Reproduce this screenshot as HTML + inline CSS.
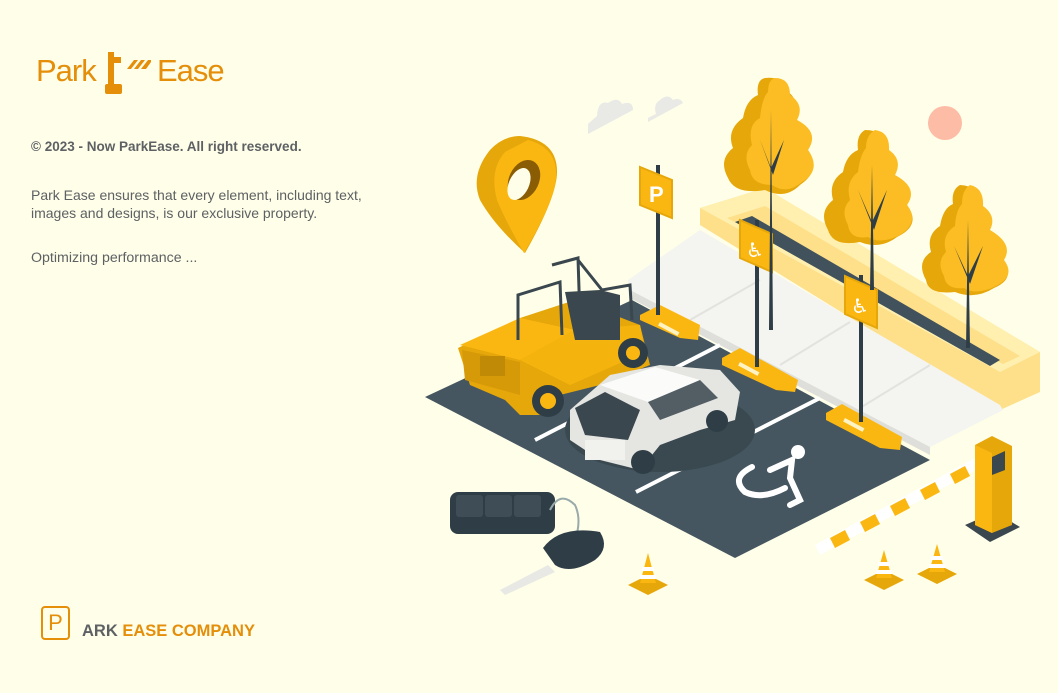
<!DOCTYPE html>
<html><head><meta charset="utf-8"><style>
html,body{margin:0;padding:0;width:1058px;height:693px;overflow:hidden;background:#fffee9;font-family:"Liberation Sans","DejaVu Sans",sans-serif}
.t{position:absolute;color:#5d6163}
</style></head><body>
<div style="position:absolute;left:36px;top:53px;font-size:31px;color:#e48e0a;letter-spacing:-1px">Park</div>
<div style="position:absolute;left:157px;top:53px;font-size:31px;color:#e48e0a;letter-spacing:-1px">Ease</div>
<svg style="position:absolute;left:0;top:0" width="1058" height="693">
<g fill="#e48e0a"><rect x="108" y="52" width="6" height="36"/><rect x="105" y="84" width="17" height="10" rx="2"/><rect x="108" y="57" width="13" height="6"/><polygon points="127,69 134,60 138,60 131,69"/><polygon points="134,69 141,60 145,60 138,69"/><polygon points="141,69 148,60 151,60 151,62 146,69"/></g>
</svg>
<div class="t" style="left:31px;top:139px;font-size:13.5px;font-weight:bold">© 2023 - Now ParkEase. All right reserved.</div>
<div class="t" style="left:31px;top:186px;font-size:14px;line-height:18px">Park Ease ensures that every element, including text,<br>images and designs, is our exclusive property.</div>
<div class="t" style="left:31px;top:250px;font-size:14.2px">Optimizing performance ...</div>
<div style="position:absolute;left:41px;top:606px;width:29px;height:34px;border:2.5px solid #e48e0a;border-radius:4px;box-sizing:border-box;color:#e48e0a;font-size:22px;text-align:center;line-height:29px">P</div>
<div style="position:absolute;left:82px;top:622px;font-size:16.5px;font-weight:bold;color:#5d6163">ARK <span style="color:#e48e0a">EASE COMPANY</span></div>

<svg style="position:absolute;left:0;top:0" width="1058" height="693">
<circle cx="945" cy="123" r="17" fill="#fdbca5"/>
<path d="M588,134 L633,110 Q633,100 622,104 Q618,96 608,103 Q598,100 597,116 L588,124 Z" fill="#e9e9e6"/>
<path d="M648,122 L683,103 Q680,97 673,100 Q668,93 660,100 Q653,104 656,114 L648,118 Z" fill="#e9e9e6"/>
<!-- pin -->
<path d="M520,136 Q556,140 557,170 Q558,195 525,253 Q494,225 480,200 Q470,175 490,150 Q503,136 520,136Z" fill="#e6a70a"/>
<path d="M528,140 Q558,148 556,178 Q555,200 524,253 Q505,220 497,200 Q489,170 505,152Z" fill="#fbb711"/>
<ellipse cx="524" cy="180" rx="15" ry="21" transform="rotate(25 524 180)" fill="#8a5d04"/>
<ellipse cx="519" cy="184" rx="10" ry="17" transform="rotate(25 519 184)" fill="#fffee9"/>
<!-- planter -->
<polygon points="700,208 765,188 1040,352 1040,392 1000,410 700,225" fill="#fedf8a"/>
<polygon points="700,208 765,188 1040,352 1000,372" fill="#fff0b0"/>
<polygon points="727,218 765,206 1020,356 1003,364" fill="#fedf8a"/>
<polygon points="735,222 752,216 1000,360 990,366" fill="#41525c"/>
<!-- sidewalk -->
<polygon points="628,280 700,230 1000,405 1003,410 930,447 630,290" fill="#f4f4f0"/>
<polygon points="630,290 930,447 930,455 630,298" fill="#dededa"/>
<g stroke="#e2e2de" stroke-width="2"><line x1="690" y1="320" x2="760" y2="280"/><line x1="780" y1="365" x2="850" y2="322"/><line x1="860" y1="408" x2="930" y2="365"/></g>
<!-- lot -->
<polygon points="425,397 632,300 930,460 735,558" fill="#455660"/>
<g stroke="#fff" stroke-width="4" fill="none"><line x1="535" y1="440" x2="720" y2="345"/><line x1="636" y1="492" x2="820" y2="398"/></g>
<g stroke="#fff" stroke-width="6" fill="none" stroke-linecap="round"><path d="M752,467 Q730,478 745,492 Q762,500 785,488"/><path d="M770,470 L792,460 L790,478 L800,500 L790,505"/></g>
<circle cx="798" cy="452" r="7" fill="#fff"/>
<!-- curbs -->
<g fill="#fbb711"><polygon points="640,315 660,305 700,325 698,340 680,338 640,320"/><polygon points="722,358 740,348 798,380 795,392 776,390 722,365"/><polygon points="826,413 842,404 902,437 900,450 880,448 826,420"/></g>
<g fill="#fff3c4"><rect x="660" y="322" width="22" height="4" transform="rotate(28 660 322)"/><rect x="740" y="362" width="22" height="4" transform="rotate(28 740 362)"/><rect x="845" y="418" width="22" height="4" transform="rotate(28 845 418)"/></g>
<!-- poles & signs -->
<g stroke="#2f3e46" stroke-width="4"><line x1="658" y1="165" x2="658" y2="315"/><line x1="757" y1="220" x2="757" y2="367"/><line x1="861" y1="275" x2="861" y2="422"/></g>
<polygon points="640,167 672,180 672,218 640,205" fill="#fbb711" stroke="#e6a70a" stroke-width="2"/>
<text x="649" y="202" font-size="22" font-weight="bold" fill="#fff" font-family="Liberation Sans">P</text>
<polygon points="740,220 772,234 772,272 740,258" fill="#fbb711" stroke="#e6a70a" stroke-width="2"/>
<text x="746" y="257" font-size="20" fill="#fff" font-family="DejaVu Sans">♿</text>
<polygon points="845,276 877,290 877,328 845,314" fill="#fbb711" stroke="#e6a70a" stroke-width="2"/>
<text x="851" y="313" font-size="20" fill="#fff" font-family="DejaVu Sans">♿</text>
<!-- trees -->
<g>
<path d="M765,78 Q785,76 788,92 Q800,100 793,118 Q818,130 808,150 Q822,170 800,185 Q785,200 765,190 Q735,195 728,178 Q718,160 733,148 Q726,130 743,118 Q746,100 758,95 Q756,80 765,78Z" fill="#e6a70a"/>
<path d="M775,78 Q790,78 790,95 Q805,105 797,120 Q820,132 808,150 Q822,170 802,182 Q787,195 772,185 Q752,185 750,170 Q742,155 752,145 Q747,125 760,118 Q762,98 768,92 Q768,80 775,78Z" fill="#fbbd23"/>
<path d="M771,110 L773,330 L769,330Z M760,140 L771,168 L784,140 L773,175Z" fill="#2f3e46"/>
<path d="M865,130 Q885,130 886,148 Q900,160 892,175 Q917,185 907,205 Q922,225 897,237 Q880,250 860,242 Q833,247 828,230 Q818,212 833,200 Q828,182 843,172 Q846,155 858,150 Q856,135 865,130Z" fill="#e6a70a"/>
<path d="M875,130 Q890,132 889,150 Q903,160 895,175 Q919,188 907,205 Q920,222 900,235 Q880,245 868,237 Q850,240 848,225 Q840,210 850,200 Q845,182 858,172 Q860,155 866,148 Q866,135 875,130Z" fill="#fbbd23"/>
<path d="M872,165 L874,290 L870,290Z M858,190 L872,222 L887,190 L874,230Z" fill="#2f3e46"/>
<path d="M960,185 Q980,186 980,205 Q995,215 987,230 Q1012,242 1002,260 Q1017,278 994,288 Q975,300 955,292 Q928,295 926,280 Q916,262 931,252 Q926,235 940,226 Q943,208 953,204 Q951,190 960,185Z" fill="#e6a70a"/>
<path d="M970,185 Q984,188 983,206 Q997,216 990,230 Q1014,244 1004,260 Q1016,276 996,286 Q976,296 964,288 Q946,290 944,276 Q936,262 946,252 Q941,235 955,226 Q956,210 962,204 Q962,190 970,185Z" fill="#fbbd23"/>
<path d="M968,220 L970,348 L966,348Z M954,246 L968,276 L983,246 L970,284Z" fill="#2f3e46"/>
</g>
<!-- jeep -->
<path d="M458,348 L520,318 L575,300 L640,325 L650,365 L600,385 L560,395 L545,415 L520,415 L505,400 L470,385 Z" fill="#e6a70a"/>
<polygon points="460,345 520,318 575,330 520,360" fill="#fbb711"/>
<polygon points="520,360 575,330 640,325 645,352 570,385" fill="#f5b40d"/>
<polygon points="462,350 520,362 520,395 465,380" fill="#d69a08"/>
<g stroke="#3a474e" stroke-width="3" fill="none"><path d="M518,340 L518,295 L560,282 L562,335"/><path d="M552,265 L578,258 L580,320"/><path d="M578,260 L602,290 L630,285 L632,320"/></g>
<polygon points="565,292 600,290 620,295 620,340 575,340" fill="#3a474e"/>
<circle cx="548" cy="401" r="16" fill="#2f3e46"/><circle cx="548" cy="401" r="8" fill="#fbb711"/>
<circle cx="633" cy="353" r="15" fill="#2f3e46"/><circle cx="633" cy="353" r="7" fill="#fbb711"/>
<rect x="480" y="356" width="25" height="20" fill="#c08a06"/>
<!-- car -->
<ellipse cx="660" cy="430" rx="95" ry="42" fill="#3a4950"/>
<path d="M570,410 L610,375 L660,365 L720,370 L740,392 L735,420 L700,430 L660,445 L640,470 L600,460 L570,440 Z" fill="#e5e5e2"/>
<polygon points="600,385 655,367 700,380 648,402" fill="#fbfbf9"/>
<polygon points="648,402 700,380 718,398 660,420" fill="#3a474e" opacity=".85"/>
<polygon points="575,408 605,392 640,410 628,440 585,435" fill="#3a474e"/>
<rect x="585" y="440" width="40" height="20" fill="#f1f1ee"/>
<circle cx="643" cy="462" r="12" fill="#2f3e46"/><circle cx="717" cy="421" r="11" fill="#2f3e46"/>
<!-- barrier -->
<polygon points="815,545 975,458 980,468 820,555" fill="#fff"/>
<g fill="#fbb711"><polygon points="830,538 845,530 850,540 835,548"/><polygon points="860,522 875,514 880,524 865,532"/><polygon points="890,506 905,498 910,508 895,516"/><polygon points="920,490 935,482 940,492 925,500"/><polygon points="950,474 965,466 970,476 955,484"/></g>
<polygon points="965,525 995,512 1020,527 990,542" fill="#3a474e"/>
<polygon points="975,445 992,436 1012,446 1012,525 992,533 975,525" fill="#e6a70a"/>
<polygon points="975,445 992,453 992,533 975,525" fill="#fbb711"/>
<polygon points="992,457 1005,451 1005,470 992,475" fill="#3a474e"/>
<!-- cones -->
<g><polygon points="628,585 648,575 668,585 648,595" fill="#e6a70a"/><polygon points="640,583 648,553 656,583" fill="#fbb711"/><rect x="642" y="567" width="12" height="4" fill="#fff"/><rect x="640" y="575" width="16" height="4" fill="#fff"/></g>
<g><polygon points="864,580 884,570 904,580 884,590" fill="#e6a70a"/><polygon points="876,578 884,550 892,578" fill="#fbb711"/><rect x="878" y="562" width="12" height="4" fill="#fff"/><rect x="876" y="570" width="16" height="4" fill="#fff"/></g>
<g><polygon points="917,574 937,564 957,574 937,584" fill="#e6a70a"/><polygon points="929,572 937,544 945,572" fill="#fbb711"/><rect x="931" y="556" width="12" height="4" fill="#fff"/><rect x="929" y="564" width="16" height="4" fill="#fff"/></g>
<!-- key -->
<rect x="450" y="492" width="105" height="42" rx="8" fill="#2f3e46"/>
<g fill="#3f4e56"><rect x="456" y="495" width="27" height="22" rx="3"/><rect x="485" y="495" width="27" height="22" rx="3"/><rect x="514" y="495" width="27" height="22" rx="3"/></g>
<path d="M550,510 Q560,490 575,505 Q582,520 575,540" stroke="#9aa" stroke-width="2" fill="none"/>
<path d="M543,548 Q560,525 600,532 Q610,548 595,560 Q570,575 555,565 Z" fill="#2f3e46"/>
<polygon points="500,590 548,565 555,572 505,595" fill="#e8e8e5"/>
</svg>
</body></html>
